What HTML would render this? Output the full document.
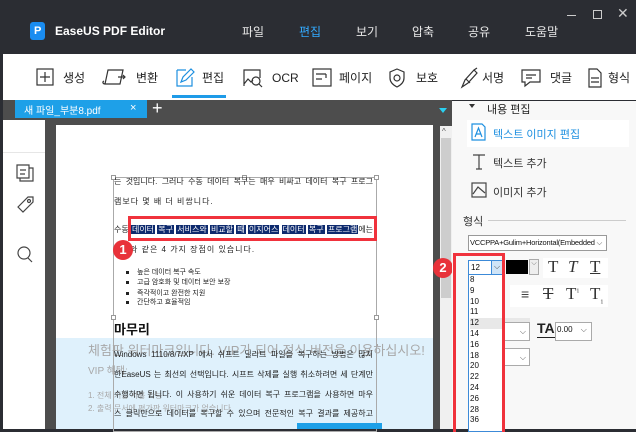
<!DOCTYPE html>
<html><head><meta charset="utf-8"><style>
*{margin:0;padding:0;box-sizing:border-box}
body{width:636px;height:432px;overflow:hidden;background:#2b2d33;font-family:"Liberation Sans","Noto Sans CJK KR",sans-serif;position:relative}
.a{position:absolute;white-space:nowrap}
.j{text-align:justify;text-align-last:justify}
.doc{font-size:8px;color:#222;line-height:10px}
.tb{font-size:12px;color:#222;top:86px;line-height:16px}
.ic{position:absolute}
</style></head><body>
<div class="a" style="left:30px;top:22px;width:15px;height:18px;background:#1a8cf0;border-radius:3px"></div>
<div class="a" style="left:34px;top:25px;color:#fff;font-size:11px;font-weight:bold">P</div>
<div class="a" style="left:55px;top:24px;color:#fff;font-size:12px;font-weight:bold">EaseUS PDF Editor</div>
<div class="a" style="left:242px;top:23px;color:#e8e8e8;font-size:12px">파일</div>
<div class="a" style="left:299px;top:23px;color:#33aaff;font-size:12px">편집</div>
<div class="a" style="left:356px;top:23px;color:#e8e8e8;font-size:12px">보기</div>
<div class="a" style="left:412px;top:23px;color:#e8e8e8;font-size:12px">압축</div>
<div class="a" style="left:468px;top:23px;color:#e8e8e8;font-size:12px">공유</div>
<div class="a" style="left:525px;top:23px;color:#e8e8e8;font-size:12px">도움말</div>
<div class="a" style="left:567px;top:15px;width:9px;height:1px;background:#ccc"></div>
<div class="a" style="left:593px;top:10px;width:9px;height:9px;border:1px solid #ccc"></div>
<div class="a" style="left:617px;top:5px;color:#ccc;font-size:14px">✕</div>
<div class="a" style="left:3px;top:54px;width:633px;height:46px;background:#fff"></div>
<svg class="ic" style="left:0;top:54px" width="636" height="46" viewBox="0 54 636 46" fill="none" stroke="#333" stroke-width="1.2">
<rect x="37" y="69" width="16" height="16"/><path d="M45 72v10M40 77h10"/>
<path d="M108 70h15l-3 14h-15zM105 84c-2 0-3-2-1-3M118 77h7M123 75l2 2-2 2"/>
<path d="M177 70h9M177 70v16h15v-9" stroke="#1e90e0"/><path d="M181 82l2-5 8-8 3 3-8 8z" stroke="#1e90e0"/>
<path d="M244 86v-16h16v8M244 84l4-5 3 3 2-2"/><circle cx="256" cy="81" r="4"/><path d="M259 84l3 3"/>
<rect x="313" y="69" width="18" height="17"/><path d="M316 74h10M326 74v4M316 79h6"/>
<path d="M397 69l7 3v6c0 4-3 7-7 9-4-2-7-5-7-9v-6z"/><circle cx="397" cy="78" r="3"/>
<path d="M462 87l3-7 9-10 3 3-9 10zM466 79l4 4M474 70l3-2"/>
<path d="M522 70h18v12h-10l-5 4v-4h-3zM526 75h10M526 78h6"/>
<path d="M589 69h8l4 4v14h-12zM591 78h8M591 82h8"/>
<rect x="172" y="95" width="54" height="3" fill="#1e9be8" stroke="none"/>
</svg>
<div class="a tb" style="left:63px;top:70px">생성</div>
<div class="a tb" style="left:136px;top:70px">변환</div>
<div class="a tb" style="left:202px;top:70px">편집</div>
<div class="a tb" style="left:272px;top:70px">OCR</div>
<div class="a tb" style="left:339px;top:70px">페이지</div>
<div class="a tb" style="left:416px;top:70px">보호</div>
<div class="a tb" style="left:482px;top:70px">서명</div>
<div class="a tb" style="left:550px;top:70px">댓글</div>
<div class="a tb" style="left:608px;top:70px">형식</div>
<div class="a" style="left:3px;top:100px;width:449px;height:329px;background:#4d4d4d"></div>
<div class="a" style="left:15px;top:100px;width:132px;height:18px;background:#1ea0e8"></div>
<div class="a" style="left:24px;top:102px;color:#fff;font-size:10px">새 파일_부분8.pdf</div>
<div class="a" style="left:130px;top:102px;color:#fff;font-size:11px">×</div>
<div class="a" style="left:152px;top:98px;color:#fff;font-size:18px;line-height:20px">+</div>
<div class="a" style="left:439px;top:108px;width:0;height:0;border-left:4px solid transparent;border-right:4px solid transparent;border-top:5px solid #2ad0f0"></div>
<div class="a" style="left:3px;top:120px;width:42px;height:309px;background:#fff"></div>
<div class="a" style="left:3px;top:152px;width:42px;height:1px;background:#e6e6e6"></div>
<svg class="ic" style="left:0;top:150px" width="46" height="120" fill="none" stroke="#444" stroke-width="1.2">
<path d="M17 15h12v13h-12zM20 28v3h13v-13h-4M20 20h6M20 24h5"/>
<path d="M18 57l10-10h5v5l-10 10z"/><circle cx="29" cy="51" r="1.5"/>
<circle cx="24" cy="103" r="6"/><path d="M28 108l4 4"/>
</svg>
<div class="a" style="left:56px;top:125px;width:377px;height:304px;background:#fff"></div>
<div class="a" style="left:56px;top:338px;width:377px;height:91px;background:#dff1fc"></div>
<div class="a" style="left:113px;top:177px;width:264px;height:255px;border:1px solid #aaa"></div>
<div class="a" style="left:111px;top:175px;width:5px;height:5px;border:1px solid #999;background:#fff"></div>
<div class="a" style="left:242px;top:175px;width:5px;height:5px;border:1px solid #999;background:#fff"></div>
<div class="a" style="left:374px;top:175px;width:5px;height:5px;border:1px solid #999;background:#fff"></div>
<div class="a" style="left:111px;top:315px;width:5px;height:5px;border:1px solid #999;background:#fff"></div>
<div class="a" style="left:374px;top:315px;width:5px;height:5px;border:1px solid #999;background:#fff"></div>
<div class="a doc j" style="left:114px;top:177px;width:259px">는 것입니다. 그러나 수동 데이터 복구는 매우 비싸고 데이터 복구 프로그</div>
<div class="a doc" style="left:114px;top:197px;letter-spacing:1px">램보다 몇 배 더 비쌉니다.</div>
<div class="a doc" style="left:114px;top:225px;width:262px"><span>수동 </span><span style="background:#0d2a6e;color:#fff;padding:0 1px">데이터</span> <span style="background:#0d2a6e;color:#fff;padding:0 1px">복구</span> <span style="background:#0d2a6e;color:#fff;padding:0 1px">서비스와</span> <span style="background:#0d2a6e;color:#fff;padding:0 1px">비교할</span> <span style="background:#0d2a6e;color:#fff;padding:0 1px">때</span> <span style="background:#0d2a6e;color:#fff;padding:0 1px">이지어스</span> <span style="background:#0d2a6e;color:#fff;padding:0 1px">데이터</span> <span style="background:#0d2a6e;color:#fff;padding:0 1px">복구</span> <span style="background:#0d2a6e;color:#fff;padding:0 1px">프로그램</span>에는</div>
<div class="a" style="left:128px;top:216px;width:249px;height:25px;border:3px solid #f0323c"></div>
<div class="a doc" style="left:130px;top:245px;letter-spacing:1px">와 같은 4 가지 장점이 있습니다.</div>
<div class="a" style="left:113px;top:240px;width:20px;height:20px;border-radius:50%;background:#e8323a;color:#fff;font-size:13px;text-align:center;line-height:20px;font-weight:bold">1</div>
<div class="a" style="left:126px;top:271px;width:3px;height:3px;background:#222"></div>
<div class="a" style="left:126px;top:281px;width:3px;height:3px;background:#222"></div>
<div class="a" style="left:126px;top:292px;width:3px;height:3px;background:#222"></div>
<div class="a" style="left:126px;top:301px;width:3px;height:3px;background:#222"></div>
<div class="a doc" style="left:137px;top:268px;font-size:7px">높은 데이터 복구 속도</div>
<div class="a doc" style="left:137px;top:278px;font-size:7px">고급 암호화 및 데이터 보안 보장</div>
<div class="a doc" style="left:137px;top:289px;font-size:7px">즉각적이고 완전한 지원</div>
<div class="a doc" style="left:137px;top:298px;font-size:7px">간단하고 효율적임</div>
<div class="a" style="left:114px;top:319px;font-size:13px;font-weight:bold;color:#111">마무리</div>
<div class="a" style="left:88px;top:340px;font-size:13px;color:#a8a8a8">체험판 워터마크입니다. VIP가 되어 정식 버전을 이용하십시오!</div>
<div class="a doc j" style="left:114px;top:350px;width:259px">Windows 1110/8/7/XP 에서 쉬프트 딜리트 파일을 복구하는 방법은 많지</div>
<div class="a" style="left:88px;top:362px;font-size:10px;color:#a8a8a8">VIP 혜택:</div>
<div class="a doc j" style="left:114px;top:370px;width:259px">한EaseUS 는 최선의 선택입니다. 시프트 삭제를 실행 취소하려면 세 단계만</div>
<div class="a" style="left:88px;top:390px;font-size:8px;color:#a8a8a8">1. 전체 기능 사용 가능</div>
<div class="a doc j" style="left:114px;top:390px;width:259px">수행하면 됩니다. 이 사용하기 쉬운 데이터 복구 프로그램을 사용하면 마우</div>
<div class="a" style="left:88px;top:403px;font-size:8px;color:#a8a8a8">2. 출력 문서에 평가판 워터마크가 없습니다.</div>
<div class="a doc j" style="left:114px;top:409px;width:259px">스 클릭만으로 데이터를 복구할 수 있으며 전문적인 복구 결과를 제공하고</div>
<div class="a" style="left:297px;top:423px;width:85px;height:6px;background:#1ea0e8"></div>
<div class="a" style="left:440px;top:126px;width:12px;height:303px;background:#f0f0f0"></div>
<div class="a" style="left:441px;top:138px;width:10px;height:160px;background:#cdcdcd"></div>
<div class="a" style="left:442px;top:127px;font-size:8px;color:#555">^</div>
<div class="a" style="left:433px;top:258px;width:20px;height:20px;border-radius:50%;background:#e8323a;color:#fff;font-size:13px;text-align:center;line-height:20px;font-weight:bold">2</div>
<div class="a" style="left:452px;top:101px;width:184px;height:328px;background:#f8f8f8"></div>
<div class="a" style="left:469px;top:104px;width:0;height:0;border-left:3px solid transparent;border-right:3px solid transparent;border-top:4px solid #333"></div>
<div class="a" style="left:487px;top:101px;font-size:11px;color:#222">내용 편집</div>
<div class="a" style="left:467px;top:120px;width:162px;height:27px;background:#fff"></div>
<svg class="ic" style="left:470px;top:122px" width="20" height="120" fill="none" stroke-width="1.2">
<path d="M2 2h10l3 3v13h-13z" stroke="#1e90e0"/><path d="M5 15l3.5-9 3.5 9M6.5 12h4" stroke="#1e90e0"/>
<path d="M3 33h12M9 33v14M6 47h6" stroke="#444"/>
<rect x="2" y="61" width="14" height="14" stroke="#444"/><path d="M3 72l5-7 7 6" stroke="#444"/>
</svg>
<div class="a" style="left:493px;top:126px;font-size:11px;color:#1e90e0">텍스트 이미지 편집</div>
<div class="a" style="left:493px;top:155px;font-size:11px;color:#333">텍스트 추가</div>
<div class="a" style="left:493px;top:184px;font-size:11px;color:#333">이미지 추가</div>
<div class="a" style="left:463px;top:213px;font-size:11px;color:#333">형식</div>
<div class="a" style="left:488px;top:220px;width:138px;height:1px;background:#ccc"></div>
<div class="a" style="left:468px;top:235px;width:139px;height:16px;border:1px solid #999;background:#fff;font-size:7.5px;line-height:14px;padding-left:1px;overflow:hidden;color:#111;letter-spacing:-0.2px">VCCPPA+Gulim+Horizontal(Embedded <span style="color:#555">⌵</span></div>
<div class="a" style="left:468px;top:260px;width:35px;height:15px;border:1px solid #3c8ad8;background:#fff;font-size:8px;line-height:13px;padding-left:2px">12</div>
<div class="a" style="left:491px;top:260px;width:12px;height:15px;border:1px solid #3c8ad8;background:#cfe4f7;font-size:8px;text-align:center;line-height:12px;color:#444">⌵</div>
<div class="a" style="left:468px;top:275px;width:35px;height:157px;border:1px solid #3c8ad8;border-top:none;background:#fff;font-size:8px;line-height:10.8px;padding-left:1px;color:#111">8<br>9<br>10<br>11<br><span style="display:block;background:#e8e8e8;width:60px">12</span>14<br>16<br>18<br>20<br>22<br>24<br>26<br>28<br>36</div>
<div class="a" style="left:506px;top:260px;width:22px;height:14px;background:#000"></div>
<div class="a" style="left:529px;top:259px;width:10px;height:16px;border:1px solid #aaa;background:#eee;font-size:7px;text-align:center;color:#666">⌵</div>
<div class="a" style="left:543px;top:258px;width:65px;height:20px;background:#fff"></div>
<div class="a" style="left:548px;top:257px;font-family:'Liberation Serif',serif;font-size:17px;color:#333">T</div>
<div class="a" style="left:568px;top:257px;font-family:'Liberation Serif',serif;font-size:17px;color:#333;font-style:italic">T</div>
<div class="a" style="left:590px;top:257px;font-family:'Liberation Serif',serif;font-size:17px;color:#333;text-decoration:underline">T</div>
<div class="a" style="left:510px;top:285px;width:98px;height:22px;background:#fff"></div>
<div class="a" style="left:521px;top:286px;font-size:14px;color:#444">≡</div>
<div class="a" style="left:543px;top:284px;font-family:'Liberation Serif',serif;font-size:17px;color:#333;text-decoration:line-through">T</div>
<div class="a" style="left:566px;top:284px;font-family:'Liberation Serif',serif;font-size:17px;color:#333">T<sup style="font-size:6px">1</sup></div>
<div class="a" style="left:590px;top:284px;font-family:'Liberation Serif',serif;font-size:17px;color:#333">T<sub style="font-size:6px">1</sub></div>
<div class="a" style="left:503px;top:322px;width:27px;height:19px;border:1px solid #aaa;background:#fff;font-size:8px;text-align:right;padding:4px 3px;color:#555">⌵</div>
<div class="a" style="left:537px;top:320px;font-size:14px;font-weight:bold;color:#222">TA</div>
<div class="a" style="left:537px;top:337px;width:18px;height:1px;background:#222"></div>
<div class="a" style="left:555px;top:322px;width:37px;height:19px;border:1px solid #aaa;background:#fff;font-size:8px;padding:2px 1px;color:#111">0.00 <span style="color:#555;margin-left:6px">⌵</span></div>
<div class="a" style="left:503px;top:348px;width:27px;height:18px;border:1px solid #aaa;background:#fff;font-size:8px;text-align:right;padding:4px 3px;color:#555">⌵</div>
<div class="a" style="left:453px;top:253px;width:52px;height:179px;border:3px solid #f0323c;border-bottom:none"></div>
</body></html>
